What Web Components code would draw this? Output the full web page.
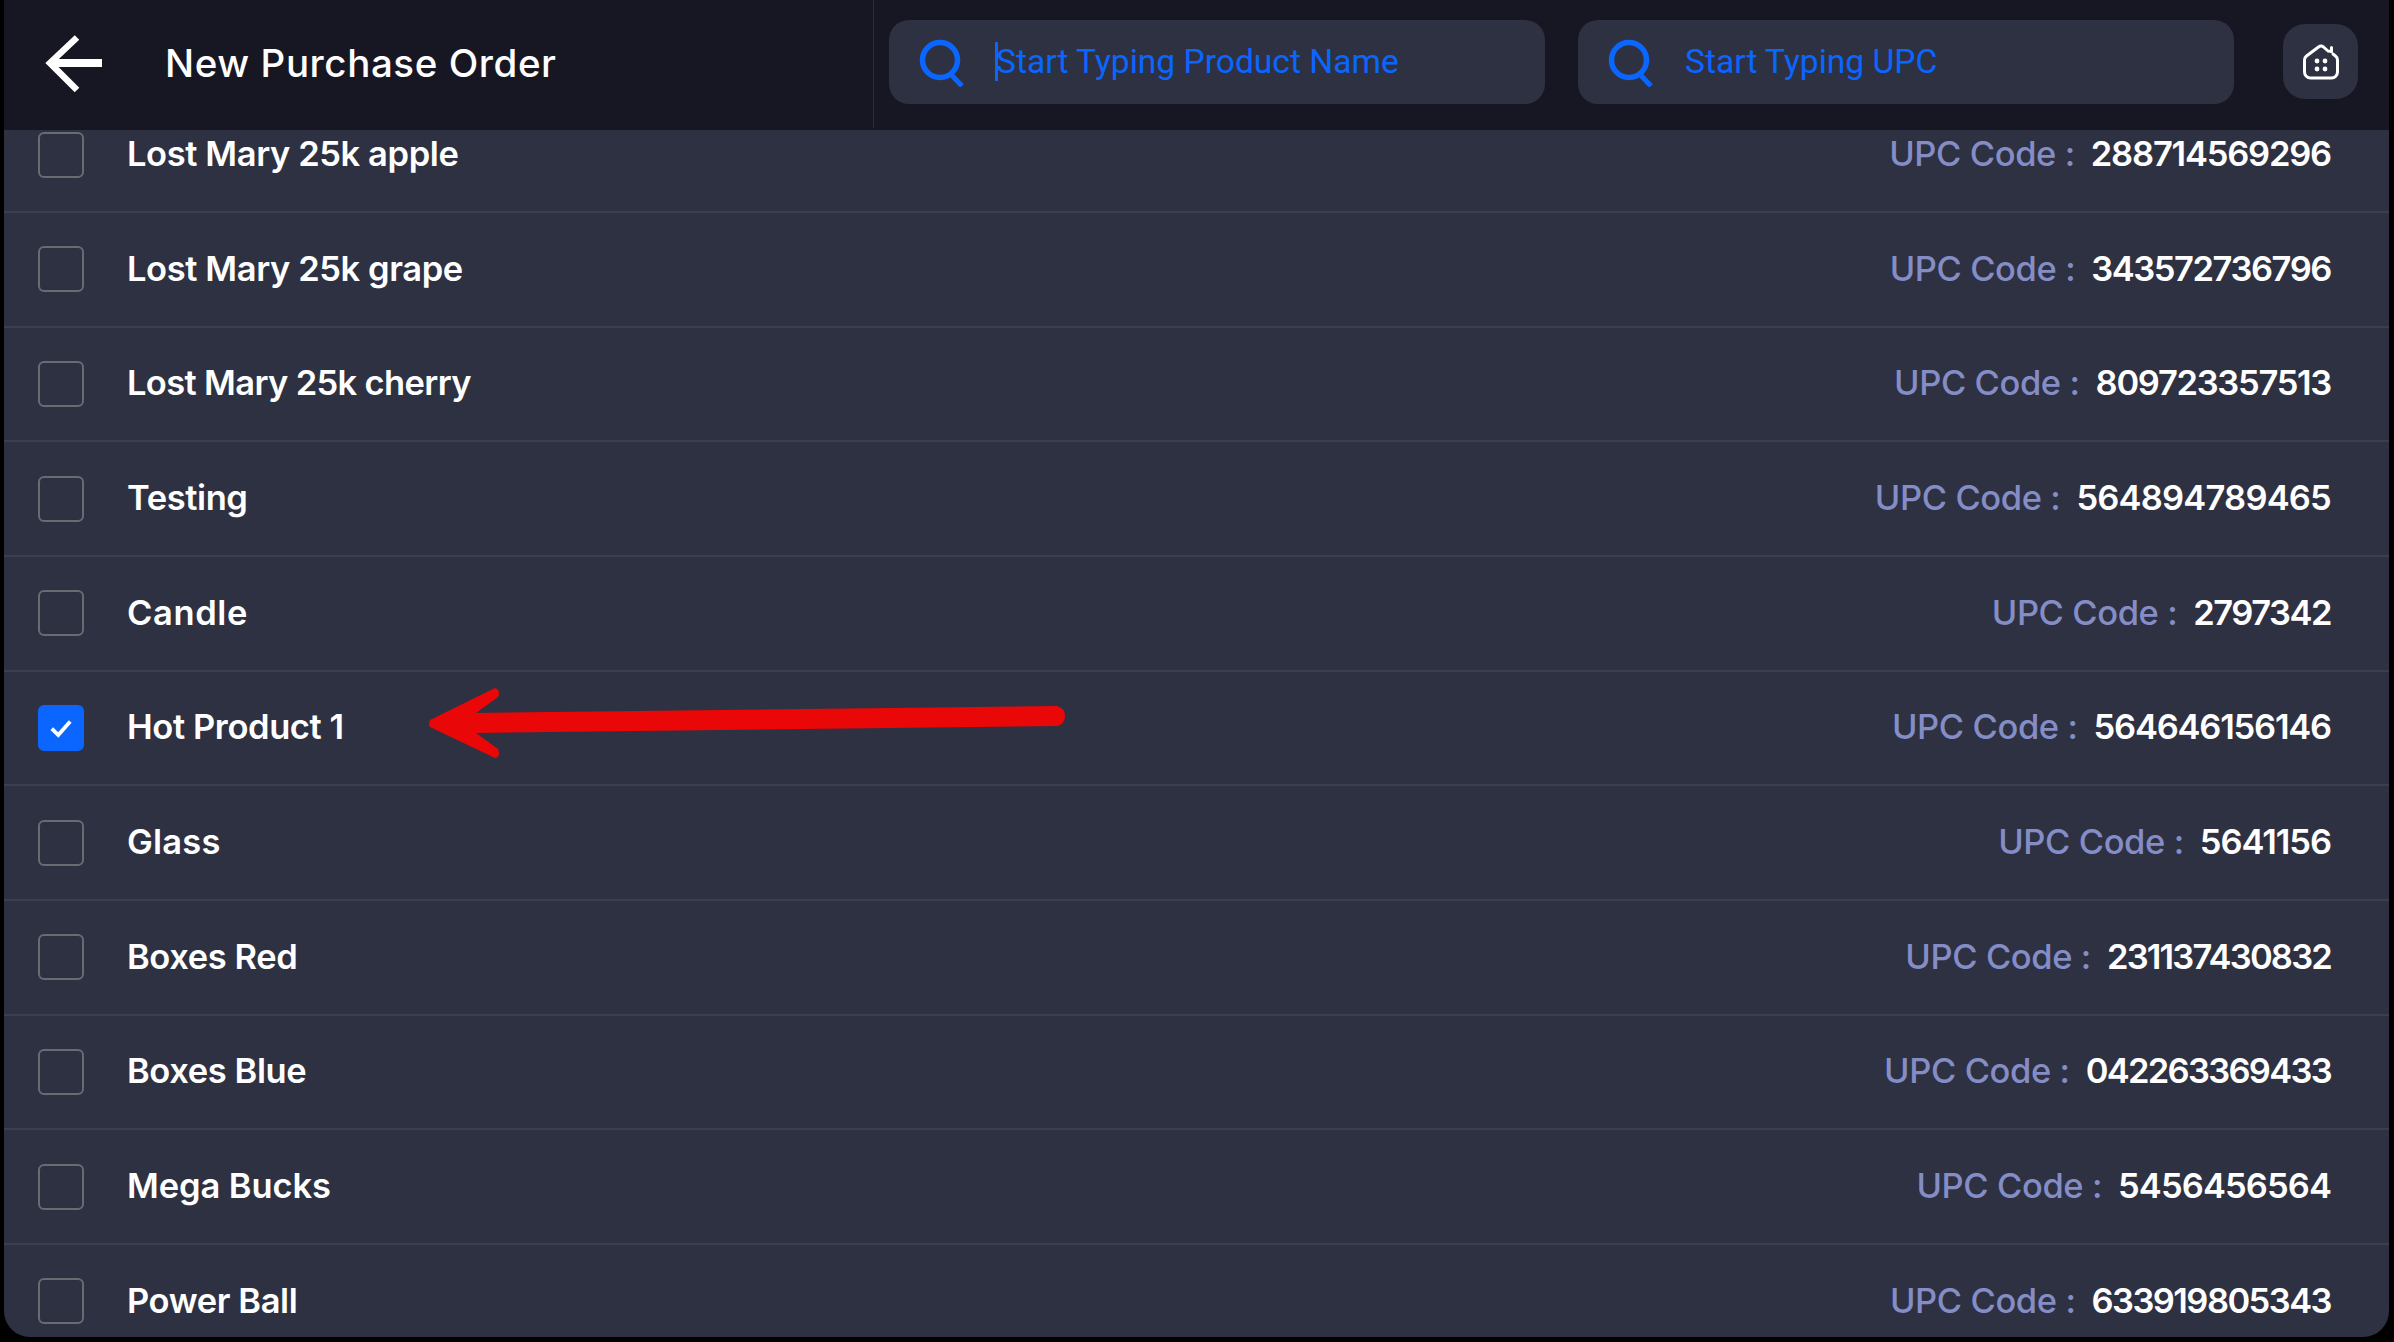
<!DOCTYPE html>
<html>
<head>
<meta charset="utf-8">
<style>
  html, body { margin: 0; height: 100%; background: #000; overflow: hidden; }
  body { font-family: Inter, "Liberation Sans", sans-serif; }
</style>
</head>
<body>
<po-screen>
  <po-header slot="header" title="New Purchase Order"></po-header>
  <po-row upc="288714569296" style="--upc-ls:-1.2px">Lost Mary 25k apple</po-row>
  <po-row upc="343572736796" style="--upc-ls:-1.43px">Lost Mary 25k grape</po-row>
  <po-row upc="809723357513" style="--name-ls:-0.65px;--upc-ls:-1.3px">Lost Mary 25k cherry</po-row>
  <po-row upc="564894789465" style="--upc-ls:-0.8px">Testing</po-row>
  <po-row upc="2797342" style="--name-ls:0.6px;--upc-ls:-1.5px">Candle</po-row>
  <po-row upc="564646156146" style="--upc-ls:-1.2px" checked>Hot Product 1</po-row>
  <po-row upc="5641156" style="--name-ls:0.2px">Glass</po-row>
  <po-row upc="231137430832" style="--upc-ls:-1.8px">Boxes Red</po-row>
  <po-row upc="042263369433" style="--upc-ls:-1.7px">Boxes Blue</po-row>
  <po-row upc="5456456564" style="--name-ls:-0.1px;--upc-ls:-0.9px">Mega Bucks</po-row>
  <po-row upc="633919805343" style="--upc-ls:-1.55px">Power Ball</po-row>
  <po-arrow slot="overlay"></po-arrow>
</po-screen>

<script>
class PoScreen extends HTMLElement {
  constructor() {
    super();
    this.attachShadow({ mode: 'open' });
  }

  connectedCallback() {
    this.shadowRoot.innerHTML = `
      <style>
        :host {
          display: flex;
          flex-direction: column;
          position: relative;
          width: 2385px;
          height: 1337px;
          margin-left: 4px;
          background: #2e3142;
          border-radius: 0 0 26px 26px;
          overflow: hidden;
        }
        .list {
          flex: 1;
          min-height: 0;
          overflow: hidden;
        }
        .scroll { margin-top: -31.67px; }
      </style>
      <slot name="header"></slot>
      <div class="list"><div class="scroll"><slot></slot></div></div>
      <slot name="overlay"></slot>
    `;
  }
}

class PoHeader extends HTMLElement {
  constructor() {
    super();
    this.attachShadow({ mode: 'open' });
  }

  connectedCallback() {
    this.shadowRoot.innerHTML = `
      <style>
        :host {
          display: flex;
          flex: none;
          height: 130px;
          background: #171723;
          position: relative;
          z-index: 1;
        }
        .left {
          width: 869px;
          height: 128px;
          border-right: 1px solid #2c2d3a;
          display: flex;
          align-items: center;
          flex: none;
        }
        .back { width: 64px; height: 64px; margin-left: 35px; flex: none; display: block; }
        h1 {
          margin: 0 0 2px 62px;
          font: 500 38.500px Inter, sans-serif;
          letter-spacing: 0.58px;
          color: #fff;
          white-space: nowrap;
        }
        .right {
          flex: 1;
          display: flex;
          align-items: flex-start;
          padding: 20px 0 0 15px;
          gap: 33px;
        }
        .home {
          width: 75px;
          height: 75px;
          margin: 4px 0 0 16px;
          border-radius: 22px;
          background: #2e3142;
          display: flex;
          align-items: center;
          justify-content: center;
          flex: none;
        }
      </style>
      <div class="left">
        <svg class="back" viewBox="0 0 64 64" fill="none" stroke="#fff">
          <path d="M12 31H63" stroke-width="8"/>
          <path d="M38 5.500L11 31L38 58" stroke-width="6.500" stroke-linejoin="miter"/>
        </svg>
        <h1>${this.getAttribute('title')}</h1>
      </div>
      <div class="right">
        <po-search placeholder="Start Typing Product Name" caret></po-search>
        <po-search placeholder="Start Typing UPC"></po-search>
        <div class="home">
          <svg width="36" height="36" viewBox="0 0 36 36" fill="none" stroke="#fff" stroke-width="3" stroke-linecap="round" stroke-linejoin="round">
            <path d="M28.500 3.500V7.500L25 7 20.500 3a4 4 0 0 0-5 0L3.500 12a5 5 0 0 0-2 4v12a6 6 0 0 0 6 6h21a6 6 0 0 0 6-6V16a5 5 0 0 0-2-4L30 10"/>
            <g fill="#fff" stroke="none">
              <circle cx="14" cy="17" r="2.400"/><circle cx="22" cy="17" r="2.400"/>
              <circle cx="14" cy="25" r="2.400"/><circle cx="22" cy="25" r="2.400"/>
            </g>
          </svg>
        </div>
      </div>
    `;
  }
}

class PoSearch extends HTMLElement {
  constructor() {
    super();
    this.attachShadow({ mode: 'open' });
  }

  connectedCallback() {
    const caret = this.hasAttribute('caret');

    this.shadowRoot.innerHTML = `
      <style>
        :host {
          display: flex;
          align-items: center;
          flex: none;
          width: 656px;
          height: 84px;
          box-sizing: border-box;
          padding-left: 30px;
          background: #2e3142;
          border-radius: 20px;
          color: #0a66ff;
          font: 400 33.600px Roboto, sans-serif;
          white-space: nowrap;
        }
        svg { flex: none; display: block; margin-top: 1px; }
        .text { margin-left: 29px; position: relative; line-height: 40px; }
        .caret {
          position: absolute;
          left: -1px;
          top: 0;
          width: 3px;
          height: 39px;
          background: #0a66ff;
        }
      </style>
      <svg width="48" height="48" viewBox="0 0 48 48" fill="none" stroke="#0a66ff">
        <circle cx="21" cy="21" r="17.500" stroke-width="5.500"/>
        <path d="M32.500 36L43 47" stroke-width="5"/>
      </svg>
      <span class="text">${caret ? '<span class="caret"></span>' : ''}${this.getAttribute('placeholder')}</span>
    `;
  }
}

class PoRow extends HTMLElement {
  constructor() {
    super();
    this.attachShadow({ mode: 'open' });
  }

  connectedCallback() {
    const checked = this.hasAttribute('checked');

    this.shadowRoot.innerHTML = `
      <style>
        :host {
          display: flex;
          align-items: center;
          height: 114.67px;
          box-sizing: border-box;
          border-bottom: 2px solid #3b3e4c;
          color: #fff;
          font: 600 34.500px Inter, sans-serif;
          letter-spacing: -0.4px;
          white-space: nowrap;
        }
        .box {
          width: 46px;
          height: 46px;
          box-sizing: border-box;
          margin-left: 34px;
          flex: none;
          border-radius: 6px;
          border: 2px solid #696b73;
          display: flex;
          align-items: center;
          justify-content: center;
        }
        .box.on { background: #0a66ff; border-color: #0a66ff; }
        .name { margin-left: 43px; flex: 1; margin-top: -2px; letter-spacing: var(--name-ls, -0.4px); }
        .label { color: #858dc6; font-weight: 500; margin: -2px 16px 0 0; }
        .upc { margin: -2px 58px 0 0; letter-spacing: var(--upc-ls, -1.05px); }
      </style>
      <span class="box ${checked ? 'on' : ''}">
        ${checked ? `<svg width="26" height="26" viewBox="0 0 24 24" fill="none" stroke="#fff" stroke-width="3.500"><path d="M3.500 12.500L9.500 18.500L20.500 6"/></svg>` : ''}
      </span>
      <span class="name"><slot></slot></span>
      <span class="label">UPC Code :</span>
      <span class="upc">${this.getAttribute('upc')}</span>
    `;
  }
}

class PoArrow extends HTMLElement {
  constructor() {
    super();
    this.attachShadow({ mode: 'open' });
  }

  connectedCallback() {
    // annotation drawn over the list, coords are relative to the screen
    this.shadowRoot.innerHTML = `
      <style>
        :host { position: absolute; left: 0; top: 0; pointer-events: none; }
        svg { display: block; }
      </style>
      <svg width="1100" height="800" viewBox="0 0 1100 800">
        <path fill="#e90707"
          d="M1053 706L472 713L494 697Q497 690 491 688L426 720Q424 723.500 426 727L491 758Q497 757 494 749L472 733L1053 726Q1061 724 1061 716Q1061 708 1053 706Z"/>
      </svg>
    `;
  }
}

customElements.define('po-screen', PoScreen);
customElements.define('po-header', PoHeader);
customElements.define('po-search', PoSearch);
customElements.define('po-row', PoRow);
customElements.define('po-arrow', PoArrow);
</script>
</body>
</html>
